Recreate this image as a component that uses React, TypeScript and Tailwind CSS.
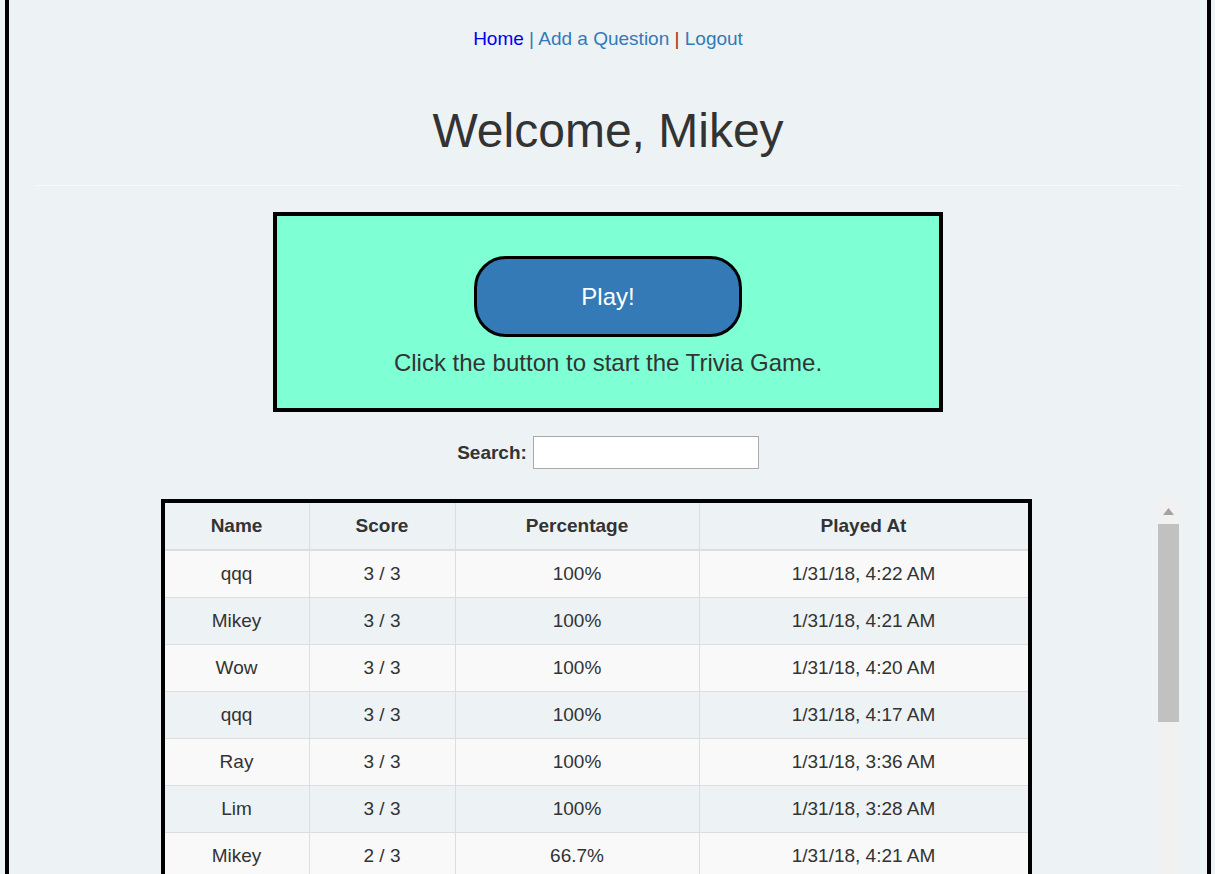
import React from "react";

const rows: [string, string, string, string][] = [
  ["qqq", "3 / 3", "100%", "1/31/18, 4:22 AM"],
  ["Mikey", "3 / 3", "100%", "1/31/18, 4:21 AM"],
  ["Wow", "3 / 3", "100%", "1/31/18, 4:20 AM"],
  ["qqq", "3 / 3", "100%", "1/31/18, 4:17 AM"],
  ["Ray", "3 / 3", "100%", "1/31/18, 3:36 AM"],
  ["Lim", "3 / 3", "100%", "1/31/18, 3:28 AM"],
  ["Mikey", "2 / 3", "66.7%", "1/31/18, 4:21 AM"],
  ["Wow", "2 / 3", "66.7%", "1/31/18, 4:19 AM"],
  ["Ray", "1 / 3", "33.3%", "1/31/18, 3:35 AM"],
];

const headers = ["Name", "Score", "Percentage", "Played At"];

export default function App() {
  return (
    <div
      className="bg-[#edf2f5] w-[1215px] h-[874px] overflow-hidden text-[#333]"
      style={{ fontFamily: '"Liberation Sans", Arial, sans-serif' }}
    >
      <div className="ml-[5px] w-[1206px] h-[874px] overflow-hidden border-x-4 border-black bg-[#edf2f5] px-[27px]">
        {/* Nav */}
        <div className="pt-[26px] text-center text-[19px] leading-[26px]">
          <a className="text-[#0000ee]">Home</a>
          <span className="text-[#337ab7]"> | </span>
          <a className="text-[#337ab7]">Add a Question</a>
          <span className="text-[#a52a2a]"> | </span>
          <a className="text-[#337ab7]">Logout</a>
        </div>

        {/* Heading */}
        <h1 className="mt-[53px] text-center text-[48px] leading-[52px] font-normal text-[#333]">
          Welcome, Mikey
        </h1>

        <div className="mt-[28px] border-t border-[#f6f8fa]" />

        {/* Play box */}
        <div className="mt-[26px] flex justify-center">
          <div className="w-[670px] h-[200px] border-4 border-black bg-[#7fffd4] flex flex-col items-center pt-[40px]">
            <button className="w-[268px] h-[81px] rounded-[32px] border-[3px] border-black bg-[#337ab7] text-white text-[24px] leading-[26px]">
              Play!
            </button>
            <p className="mt-[13px] text-[24px] leading-[26px] text-[#333]">
              Click the button to start the Trivia Game.
            </p>
          </div>
        </div>

        {/* Search */}
        <div className="mt-[24px] flex justify-center items-center gap-[6px]">
          <label className="font-bold text-[19px] leading-[26px]">Search:</label>
          <input
            type="text"
            className="w-[226px] h-[33px] border border-[#aaa] bg-white outline-none"
          />
        </div>

        {/* Table + scrollbar */}
        <div className="mt-[30px] flex">
          <div className="flex-1 flex justify-center">
            <div className="w-[871px] self-start border-4 border-black text-[19px]">
              <div className="grid grid-cols-[144px_146px_244px_329px] border-b-2 border-[#ddd]">
                {headers.map((h, i) => (
                  <div
                    key={h}
                    className={`py-[10px] leading-[26px] text-center font-bold ${
                      i > 0 ? "border-l border-[#ddd]" : ""
                    }`}
                  >
                    {h}
                  </div>
                ))}
              </div>
              {rows.map((r, ri) => (
                <div
                  key={ri}
                  className={`grid grid-cols-[144px_146px_244px_329px] ${
                    ri > 0 ? "border-t border-[#ddd]" : ""
                  } ${ri % 2 === 0 ? "bg-[#f9f9f9]" : "bg-[#edf2f5]"}`}
                >
                  {r.map((c, ci) => (
                    <div
                      key={ci}
                      className={`py-[10px] leading-[26px] text-center ${
                        ci > 0 ? "border-l border-[#ddd]" : ""
                      }`}
                    >
                      {c}
                    </div>
                  ))}
                </div>
              ))}
            </div>
          </div>
          {/* fake scrollbar */}
          <div className="w-[24px] bg-[#f1f1f1] flex flex-col">
            <div className="h-[25px] flex items-center justify-center">
              <svg width="11" height="7" viewBox="0 0 11 7">
                <polygon points="5.5,0 11,7 0,7" fill="#a3a3a3" />
              </svg>
            </div>
            <div className="ml-[2px] w-[21px] h-[198px] bg-[#c1c1c1]" />
          </div>
        </div>
      </div>
    </div>
  );
}
